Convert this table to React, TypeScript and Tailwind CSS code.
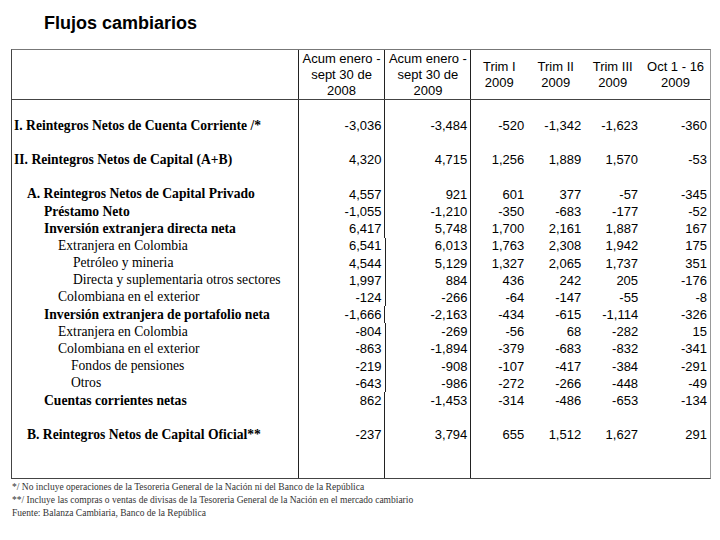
import React from "react";

type Row = {
  label?: string;
  indent?: number;
  bold?: boolean;
  values?: string[];
};

const rows: Row[] = [
  {},
  { label: "I. Reintegros Netos de Cuenta Corriente /*", indent: 0, bold: true, values: ["-3,036", "-3,484", "-520", "-1,342", "-1,623", "-360"] },
  {},
  { label: "II. Reintegros Netos de Capital (A+B)", indent: 0, bold: true, values: ["4,320", "4,715", "1,256", "1,889", "1,570", "-53"] },
  {},
  { label: "A. Reintegros Netos de Capital Privado", indent: 1, bold: true, values: ["4,557", "921", "601", "377", "-57", "-345"] },
  { label: "Préstamo Neto", indent: 2, bold: true, values: ["-1,055", "-1,210", "-350", "-683", "-177", "-52"] },
  { label: "Inversión extranjera directa neta", indent: 2, bold: true, values: ["6,417", "5,748", "1,700", "2,161", "1,887", "167"] },
  { label: "Extranjera en Colombia", indent: 3, values: ["6,541", "6,013", "1,763", "2,308", "1,942", "175"] },
  { label: "Petróleo y mineria", indent: 4, values: ["4,544", "5,129", "1,327", "2,065", "1,737", "351"] },
  { label: "Directa y suplementaria otros sectores", indent: 4, values: ["1,997", "884", "436", "242", "205", "-176"] },
  { label: "Colombiana en el exterior", indent: 3, values: ["-124", "-266", "-64", "-147", "-55", "-8"] },
  { label: "Inversión extranjera de portafolio neta", indent: 2, bold: true, values: ["-1,666", "-2,163", "-434", "-615", "-1,114", "-326"] },
  { label: "Extranjera en Colombia", indent: 3, values: ["-804", "-269", "-56", "68", "-282", "15"] },
  { label: "Colombiana en el exterior", indent: 3, values: ["-863", "-1,894", "-379", "-683", "-832", "-341"] },
  { label: "Fondos de pensiones", indent: 5, values: ["-219", "-908", "-107", "-417", "-384", "-291"] },
  { label: "Otros", indent: 5, values: ["-643", "-986", "-272", "-266", "-448", "-49"] },
  { label: "Cuentas corrientes netas", indent: 2, bold: true, values: ["862", "-1,453", "-314", "-486", "-653", "-134"] },
  {},
  { label: "B. Reintegros Netos de Capital Oficial**", indent: 1, bold: true, values: ["-237", "3,794", "655", "1,512", "1,627", "291"] },
  {},
  {},
];

// left padding per indent level
const indents = ["pl-[2px]", "pl-[15px]", "pl-[32px]", "pl-[46px]", "pl-[61px]", "pl-[59px]"];

const widths = ["w-[87px]", "w-[86px]", "w-[56px]", "w-[57px]", "w-[57px]", "w-[69px]"];
const dividers = ["border-r border-[#222]", "border-r border-[#222]", "", "", "", ""];

const App = () => {
  return (
    <div className="w-[720px] h-[540px] bg-white relative font-['Liberation_Sans',Arial,sans-serif] text-black">
      {/* title */}
      <div className="pt-[12px] pl-[44px] h-[49px] text-[18px] font-bold leading-[22px]">
        Flujos cambiarios
      </div>

      {/* table */}
      <div className="ml-[11px] w-[700px] border border-[#444] border-t-[#777] border-r-[#999]">
        <div className="flex h-[50px] border-b border-[#444] text-[13px] leading-[16px] text-center">
          <div className="w-[287px] border-r border-[#222]" />
          <div className="w-[87px] border-r border-[#222] flex items-center justify-center">
            Acum enero -<br />sept 30 de<br />2008
          </div>
          <div className="w-[86px] border-r border-[#222] flex items-center justify-center">
            Acum enero -<br />sept 30 de<br />2009
          </div>
          <div className="w-[56px] flex items-center justify-center">Trim I<br />2009</div>
          <div className="w-[57px] flex items-center justify-center">Trim II<br />2009</div>
          <div className="w-[57px] flex items-center justify-center">Trim III<br />2009</div>
          <div className="w-[69px] flex items-center justify-center">Oct 1 - 16<br />2009</div>
        </div>

        {rows.map((r, i) => (
          <div key={i} className="flex h-[17.2px]">
            <div
              className={`w-[287px] border-r border-[#222] flex items-center whitespace-nowrap font-['Liberation_Serif','Times_New_Roman',serif] text-[13.6px] ${indents[r.indent ?? 0]} ${r.bold ? "font-bold" : ""}`}
            >
              {r.label}
            </div>
            {widths.map((w, j) => (
              <div
                key={j}
                className={`${w} ${dividers[j]} flex items-center justify-end pr-[3px] text-[13px]`}
              >
                {r.values ? r.values[j] : ""}
              </div>
            ))}
          </div>
        ))}
      </div>

      {/* footnotes */}
      <div className="pl-[12px] pt-[2px] font-['Liberation_Serif','Times_New_Roman',serif] text-[9.5px] leading-[13px] text-[#333]">
        <p>*/ No incluye operaciones de la Tesoreria General de la Nación ni del Banco de la República</p>
        <p>**/ Incluye las compras o ventas de divisas de la Tesoreria General de la Nación en el mercado cambiario</p>
        <p>Fuente: Balanza Cambiaria, Banco de la República</p>
      </div>
    </div>
  );
};

export default App;
